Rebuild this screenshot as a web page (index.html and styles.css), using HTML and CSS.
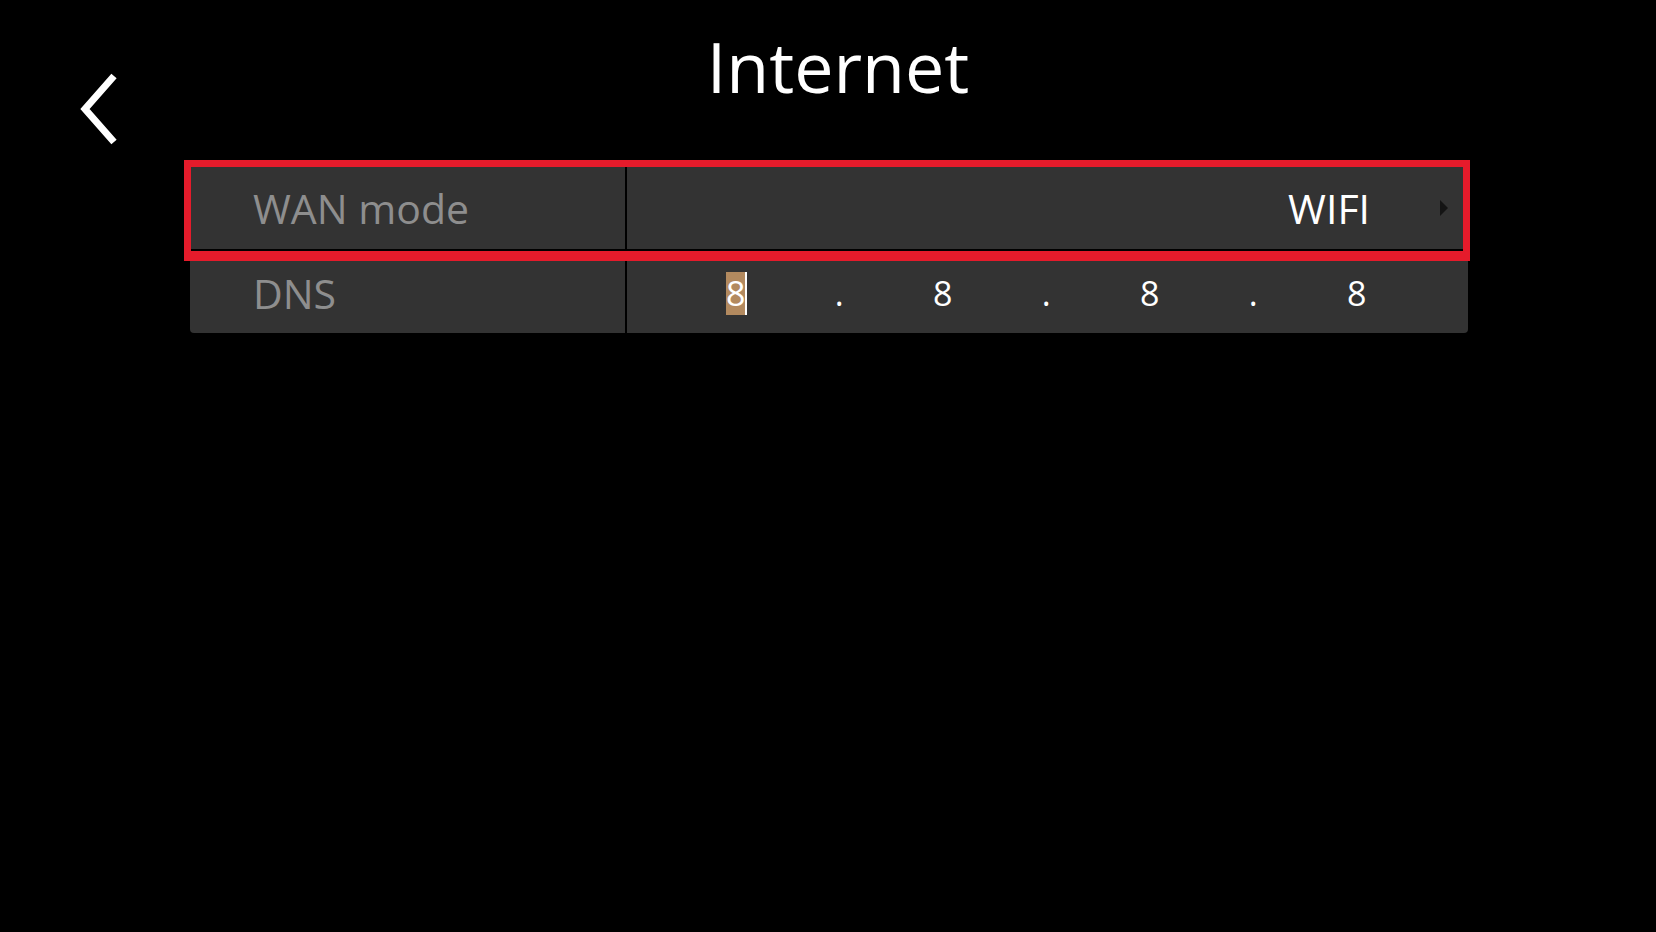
FILE: index.html
```html
<!DOCTYPE html>
<html lang="en">
<head>
    <meta charset="UTF-8">
    <meta name="viewport" content="width=device-width, initial-scale=1.0">
    <title>Internet</title>
    <link rel="stylesheet" href="styles.css">
</head>
<body>
    <div class="page">
        <header class="topbar">
            <a class="back" href="#" aria-label="Back">
                <svg width="46" height="78" viewBox="0 0 46 78">
                    <polyline points="37,6 8,39 37,72" fill="none" stroke="#fff" stroke-width="7"/>
                </svg>
            </a>
            <h1 class="title">Internet</h1>
        </header>

        <div class="settings">
            <div class="row row-focused">
                <div class="cell-label">WAN mode</div>
                <div class="cell-value value-select">
                    <span class="value-text">WIFI</span>
                    <span class="arrow-right"></span>
                </div>
            </div>
            <div class="row row-last">
                <div class="cell-label">DNS</div>
                <div class="cell-value">
                    <div class="ip-field">
                        <span class="ip-part"><span class="caret">8</span></span>
                        <span class="ip-dot">.</span>
                        <span class="ip-part">8</span>
                        <span class="ip-dot">.</span>
                        <span class="ip-part">8</span>
                        <span class="ip-dot">.</span>
                        <span class="ip-part">8</span>
                    </div>
                </div>
            </div>
        </div>
    </div>
</body>
</html>
```

FILE: styles.css
```css
body {
    margin: 0;
    background-color: #000;
    font-family: "Open Sans", "Noto Sans", sans-serif;
    color: #fff;
}
.page {
    padding-top: 18px;
}
.topbar {
    display: grid;
    grid-template-columns: 190px 1fr 190px;
    height: 142px;
}
.back {
    display: block;
    margin-left: 77px;
    margin-top: 52px;
    width: 46px;
    height: 78px;
}
.title {
    margin: 0;
    padding-top: 3px;
    padding-left: 20px;
    font-size: 70px;
    font-weight: 400;
    line-height: 91px;
    text-align: center;
    color: #fff;
}
.settings {
    margin-left: 190px;
    width: 1278px;
}
.row {
    display: flex;
    background-color: #333;
}
.row-focused {
    position: relative;
    height: 91px;
    border-bottom: 2px solid #000;
    box-sizing: border-box;
}
.row-focused .cell-label,
.row-focused .cell-value {
    padding-top: 7px;
}
.row-focused::after {
    content: "";
    position: absolute;
    top: 0;
    left: -6px;
    right: -2px;
    bottom: -12px;
    border: 7px solid #e51b2b;
    border-bottom-width: 10px;
    pointer-events: none;
}
.row-last {
    margin-top: 10px;
    height: 72px;
    border-radius: 0 0 4px 4px;
}
.row-last .cell-label,
.row-last .cell-value {
    padding-bottom: 8px;
}
.cell-label {
    display: flex;
    align-items: center;
    width: 435px;
    padding-left: 63px;
    box-sizing: border-box;
    font-size: 41px;
    color: #8e8e8e;
}
.cell-value {
    display: flex;
    align-items: center;
    flex: 1;
    border-left: 2px solid #000;
    box-sizing: border-box;
}
.value-select {
    justify-content: flex-end;
    padding-right: 20px;
}
.value-text {
    font-size: 41px;
    color: #fff;
}
.arrow-right {
    width: 0;
    height: 0;
    margin-left: 70px;
    border-left: 8px solid #141414;
    border-top: 8px solid transparent;
    border-bottom: 8px solid transparent;
}
.ip-field {
    display: grid;
    grid-template-columns: repeat(7, 103.5px);
    margin-left: 57px;
    font-size: 34px;
    line-height: 43px;
    color: #fff;
}
.ip-part,
.ip-dot {
    text-align: center;
}
.caret {
    display: inline-block;
    background-color: #b38a5f;
    border-right: 2px solid #fff;
    margin-left: 2px;
}
```
